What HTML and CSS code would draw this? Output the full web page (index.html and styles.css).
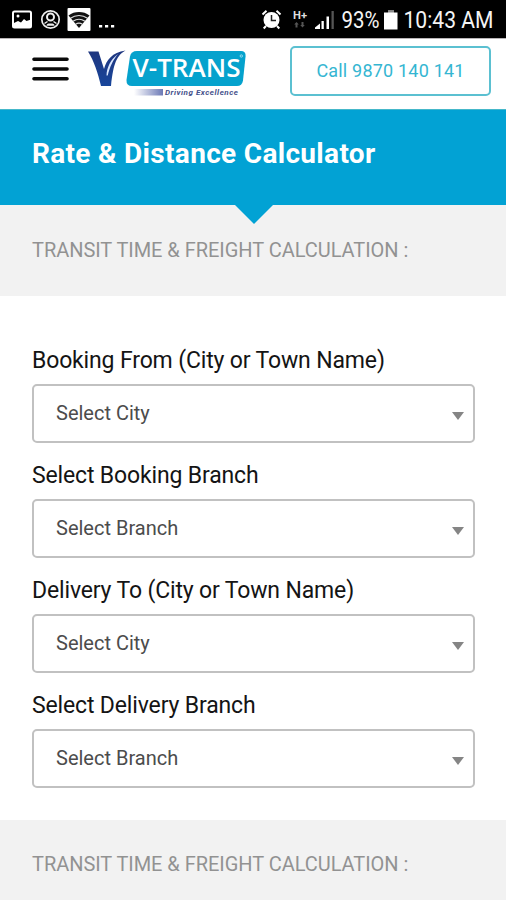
FILE: index.html
```html
<!DOCTYPE html>
<html lang="en">
<head>
<meta charset="utf-8">
<title>Rate &amp; Distance Calculator</title>
<link rel="stylesheet" href="styles.css">
</head>
<body>
<div class="status">
  <svg class="status-left" width="130" height="38" viewBox="0 0 130 38">
    <rect x="13" y="11.500" width="18" height="16" rx="1.500" fill="none" stroke="#fff" stroke-width="2"/>
    <path d="M14 27v-4l4-2 3 1.500 3-3.500 2.500 2 4.500-1.500v7.500z" fill="#fff"/>
    <circle cx="18" cy="16" r="1.500" fill="#fff"/>
    <circle cx="50.500" cy="19.500" r="8.700" fill="none" stroke="#eee" stroke-width="1.700"/>
    <circle cx="50.500" cy="17" r="3.500" fill="none" stroke="#eee" stroke-width="2"/>
    <path d="M44.500 23.500l3-2M56.500 23.500l-3-2" stroke="#eee" stroke-width="1.500"/>
    <path d="M46.500 25.800c0-1.700 1-2.300 4-2.300s4 .6 4 2.300z" fill="#eee"/>
    <rect x="67.500" y="8" width="23" height="23" rx="1" fill="#fff"/>
    <path d="M68.500 15.500c6-4.600 15-4.600 21 0L79 28z" fill="#111"/>
    <path d="M70.500 18.300c5-3.700 12-3.700 17 0M73 21.300c3.700-2.600 8.300-2.600 12 0M75.600 24.200c2-1.300 4.800-1.300 6.800 0" fill="none" stroke="#ddd" stroke-width="1.100"/>
    <path d="M99 25h3.200v2.500H99zM105 25h3.200v2.500H105zM111 25h3.200v2.500H111z" fill="#fff"/>
  </svg>
  <svg class="status-right" width="256" height="38" viewBox="250 0 256 38">
    <circle cx="271.500" cy="20" r="8" fill="#fff"/>
    <path d="M262.500 14.500l4-3.700M280.500 14.500l-4-3.700M266 26l-2.300 2.500M277 26l2.300 2.500" stroke="#fff" stroke-width="2"/>
    <path d="M271.500 15v5.500h4.500" fill="none" stroke="#222" stroke-width="1.500"/>
    <text x="293" y="18.500" class="network" textLength="14" lengthAdjust="spacingAndGlyphs">H+</text>
    <path d="M296.500 22l2.300 2.500h-1.300v3h-2v-3h-1.300zM302.500 27.500l-2.300-2.500h1.300v-3h2v3h1.300z" fill="#555"/>
    <path d="M315 29v-1.500l5-4V29zM321.500 21h2.300v8h-2.300zM326.500 16.500h2.500V29h-2.500z" fill="#fff"/>
    <path d="M331.500 11h2.300v18h-2.300z" fill="#555"/>
    <text x="341.500" y="28.200" class="status-text" textLength="38" lengthAdjust="spacingAndGlyphs">93%</text>
    <path d="M388 10.500h6v2h3.500v17H384v-17h4z" fill="#fff"/>
    <path d="M388 10.500h6v2h-6z" fill="#888"/>
    <text x="403.500" y="28.200" class="status-text" textLength="90" lengthAdjust="spacingAndGlyphs">10:43 AM</text>
  </svg>
</div>
<header class="header">
  <svg class="menu" width="38" height="26" viewBox="0 0 38 26" role="img" aria-label="Menu">
    <path d="M2 3.200h33M2 13h33M2 22.800h33" stroke="#0a0a0a" stroke-width="3.600" stroke-linecap="round"/>
  </svg>
  <svg class="logo" width="160" height="50" viewBox="87 48 160 50">
    <defs>
      <linearGradient id="fade"><stop offset="0" stop-color="#fff"/><stop offset="1" stop-color="#6c79b6"/></linearGradient>
      <linearGradient id="navy" x2="0" y2="1"><stop offset="0" stop-color="#20377f"/><stop offset="1" stop-color="#17459b"/></linearGradient>
    </defs>
    <path d="M88 51.500h10.500l5.500 17.500c2.500-9 8-16.500 21.500-18.500-8.500 5-12 12-14.500 35.500h-10C98 73 94 61 88 51.500z" fill="url(#navy)"/>
    <path d="M106.500 75.500c.3-8 4-16 11.500-21.500-5 6-8 12.500-10.300 21.500z" fill="#dbe8ff"/>
    <path d="M137 51h104q4.800 0 4.600 5l-2.600 24.500q-1 5.500-6 5.500H132q-5.800 0-5.500-6l3.500-23.500q1-5.500 7-5.500z" fill="#05a2cd"/>
    <text x="132.500" y="77.300" class="brand" textLength="108" lengthAdjust="spacingAndGlyphs">V-TRANS</text>
    <circle cx="241.300" cy="56" r="1.200" fill="none" stroke="#c9edf7" stroke-width=".7"/>
    <rect x="134" y="89" width="29" height="6.500" fill="url(#fade)"/>
    <text x="165" y="95.300" class="tagline" textLength="73">Driving Excellence</text>
  </svg>
  <a class="call">Call 9870 140 141</a>
</header>
<main>
  <div class="banner"><h1>Rate &amp; Distance Calculator</h1></div>
  <h2 class="section">TRANSIT TIME &amp; FREIGHT CALCULATION :</h2>
  <form class="form">
    <div class="field"><label>Booking From (City or Town Name)</label><div class="select"><span>Select City</span><i class="arrow"></i></div></div>
    <div class="field"><label>Select Booking Branch</label><div class="select"><span>Select Branch</span><i class="arrow"></i></div></div>
    <div class="field"><label>Delivery To (City or Town Name)</label><div class="select"><span>Select City</span><i class="arrow"></i></div></div>
    <div class="field"><label>Select Delivery Branch</label><div class="select"><span>Select Branch</span><i class="arrow"></i></div></div>
  </form>
  <h2 class="section results">TRANSIT TIME &amp; FREIGHT CALCULATION :</h2>
</main>
</body>
</html>
```
FILE: styles.css
```css
* { box-sizing: border-box; }
body {
  margin: 0;
  height: 900px;
  overflow: hidden;
  background: #fff;
  font-family: Roboto, "Liberation Sans", sans-serif;
}
svg { display: block; flex: none; }
.status {
  display: flex;
  justify-content: space-between;
  height: 38px;
  background: #000;
}
.status-text { font-size: 23.4px; fill: #f4f4f4; }
.network { font-size: 10px; font-weight: 700; fill: #ddd; }
.header {
  display: flex;
  align-items: flex-start;
  height: 72px;
  padding: 0 15px 0 32px;
  border-top: 1px solid #b9b5b7;
  border-bottom: 1px solid #45b8ca;
}
.menu { margin-top: 17px; }
.logo { margin: 9px 0 0 17px; }
.brand { font-family: "Open Sans", sans-serif; font-size: 25px; font-weight: 600; fill: #fff; }
.tagline { font-size: 8px; font-weight: 700; font-style: italic; fill: #45518b; }
.call {
  width: 201px;
  height: 50px;
  margin: 7px 0 0 auto;
  border: 2px solid #5bc0d1;
  border-radius: 5px;
  color: #35b6d2;
  font-size: 18px;
  line-height: 45px;
  letter-spacing: .2px;
  text-align: center;
}
.banner {
  position: relative;
  height: 95px;
  padding: 25px 32px;
  background: #02a2d4;
}
.banner::after {
  content: "";
  position: absolute;
  top: 94px;
  left: 234px;
  border: solid transparent;
  border-width: 20px 20px 0;
  border-top-color: #02a2d4;
}
h1 {
  margin: 0;
  color: #fff;
  font-size: 28px;
  font-weight: 700;
  line-height: 38px;
  letter-spacing: .32px;
}
.section {
  height: 91px;
  margin: 0;
  padding: 30px 32px;
  background: #f2f2f2;
  color: #929292;
  font-size: 20px;
  font-weight: 400;
  line-height: 30px;
  letter-spacing: -.04px;
}
.results { padding-top: 29px; }
.form {
  display: grid;
  grid-auto-rows: 115px;
  height: 524px;
  padding: 47px 31px 0 32px;
}
label {
  display: block;
  height: 41px;
  color: #141414;
  font-size: 23px;
  line-height: 36px;
  letter-spacing: -.15px;
}
.select {
  display: flex;
  align-items: center;
  justify-content: space-between;
  height: 59px;
  padding: 0 9px 2px 22px;
  border: 2px solid #c1c1c1;
  border-radius: 5px;
  color: #4c4c4c;
  font-size: 20px;
}
.arrow {
  margin-top: 6px;
  border: solid transparent;
  border-width: 8px 6px 0;
  border-top-color: #858585;
}
```
